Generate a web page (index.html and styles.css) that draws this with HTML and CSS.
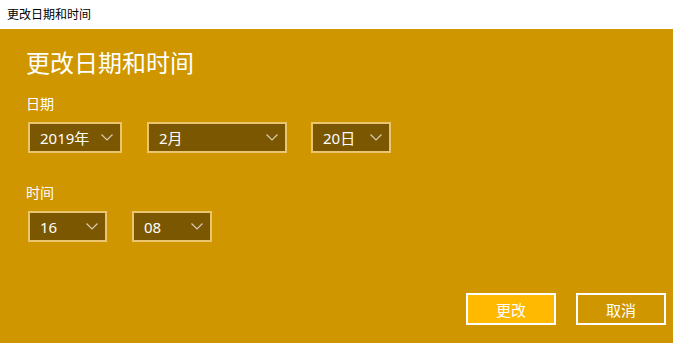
FILE: index.html
```html
<!DOCTYPE html>
<html lang="zh-CN">
<head>
    <meta charset="UTF-8">
    <meta name="viewport" content="width=device-width, initial-scale=1.0">
    <title>更改日期和时间</title>
    <link rel="stylesheet" href="styles.css">
</head>
<body>

    <!-- Title bar -->
    <div class="titlebar">更改日期和时间</div>

    <div class="panel">
        <h1 class="panel-title">更改日期和时间</h1>

        <!-- Date -->
        <div class="field-label">日期</div>
        <div class="select-row">
            <div class="select select-year">
                <span>2019年</span>
                <svg class="chevron" width="12" height="7" viewBox="0 0 12 7"><polyline points="0.5,0.5 6,6 11.5,0.5" /></svg>
            </div>
            <div class="select select-month">
                <span>2月</span>
                <svg class="chevron" width="12" height="7" viewBox="0 0 12 7"><polyline points="0.5,0.5 6,6 11.5,0.5" /></svg>
            </div>
            <div class="select select-day">
                <span>20日</span>
                <svg class="chevron" width="12" height="7" viewBox="0 0 12 7"><polyline points="0.5,0.5 6,6 11.5,0.5" /></svg>
            </div>
        </div>

        <!-- Time -->
        <div class="field-label field-label-time">时间</div>
        <div class="select-row">
            <div class="select select-hour">
                <span>16</span>
                <svg class="chevron" width="12" height="7" viewBox="0 0 12 7"><polyline points="0.5,0.5 6,6 11.5,0.5" /></svg>
            </div>
            <div class="select select-minute">
                <span>08</span>
                <svg class="chevron" width="12" height="7" viewBox="0 0 12 7"><polyline points="0.5,0.5 6,6 11.5,0.5" /></svg>
            </div>
        </div>

        <!-- Buttons -->
        <div class="actions">
            <button class="btn btn-primary">更改</button>
            <button class="btn">取消</button>
        </div>
    </div>

</body>
</html>
```

FILE: styles.css
```css
/* Global */
body {
    margin: 0;
    padding: 0;
    font-family: "Noto Sans", "Noto Sans CJK SC", sans-serif;
    background-color: #cf9600;
    height: 343px;
    overflow: hidden;
}

.titlebar {
    height: 29px;
    line-height: 29px;
    padding-left: 7px;
    background-color: #fff;
    color: #000;
    font-size: 12px;
}

.panel {
    height: 314px;
    box-sizing: border-box;
    padding: 18px 7px 18px 26px;
    display: flex;
    flex-direction: column;
    background-color: #cf9600;
    color: #fff;
}

.panel-title {
    margin: 0;
    font-size: 24px;
    line-height: 32px;
    font-weight: normal;
}

.field-label {
    margin-top: 15px;
    font-size: 14px;
    line-height: 20px;
}

.field-label-time {
    margin-top: 30px;
}

/* Dropdowns */
.select-row {
    display: flex;
    gap: 25px;
    margin-top: 8px;
    padding-left: 2px;
}

.select {
    height: 31px;
    box-sizing: border-box;
    border: 2px solid #eac570;
    background-color: #7a5700;
    display: flex;
    align-items: center;
    justify-content: space-between;
    padding: 0 7px 0 10px;
    font-size: 15px;
}

.select-year { width: 94px; }
.select-month { width: 140px; }
.select-day { width: 80px; margin-left: -1px; }
.select-hour { width: 79px; }
.select-minute { width: 80px; }

.chevron {
    fill: none;
    stroke: rgba(255, 255, 255, 0.7);
    stroke-width: 1.2;
}

/* Buttons */
.actions {
    margin-top: auto;
    display: flex;
    justify-content: flex-end;
    gap: 20px;
}

.btn {
    width: 90px;
    height: 32px;
    border: 2px solid #fff;
    background-color: transparent;
    color: #fff;
    font-family: inherit;
    font-size: 15px;
    padding: 0;
}

.btn-primary {
    background-color: #ffb900;
}
```
